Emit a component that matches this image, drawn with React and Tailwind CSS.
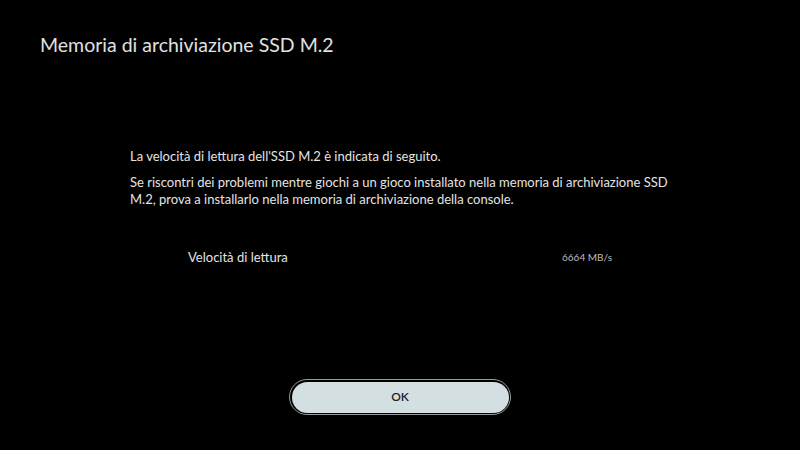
export default function App() {
  return (
    <div
      className="flex h-[450px] w-[800px] flex-col bg-black text-[#e6e6e6]"
      style={{ fontFamily: "Lato, 'Noto Sans', sans-serif" }}
    >
      <h1 className="ml-[40px] mt-[31px] text-[19.5px] font-normal leading-[28px] text-[#e0e0e0]">
        Memoria di archiviazione SSD M.2
      </h1>

      <div className="ml-[130px] mt-[89px] w-[545px] text-[13px] leading-[17px] text-[#e4e4e4]">
        <p>La velocità di lettura dell'SSD M.2 è indicata di seguito.</p>
        <p className="mt-[9px]">
          Se riscontri dei problemi mentre giochi a un gioco installato nella memoria di archiviazione SSD M.2, prova a
          installarlo nella memoria di archiviazione della console.
        </p>
      </div>

      <div className="ml-[188px] mt-[40px] flex w-[424px] items-center justify-between">
        <span className="text-[13px] text-[#e4e4e4]">Velocità di lettura</span>
        <span className="text-[10px] text-[#bdbdbd]">6664 MB/s</span>
      </div>

      <div className="mt-auto mb-[35px] flex justify-center">
        <button
          type="button"
          className="h-[36px] w-[222px] rounded-full border-[1.5px] border-[#9a9a9a] p-[1.5px]"
        >
          <span className="flex h-full w-full items-center justify-center rounded-full bg-[#d3dfe0] text-[12px] font-semibold text-[#222]">
            OK
          </span>
        </button>
      </div>
    </div>
  )
}
